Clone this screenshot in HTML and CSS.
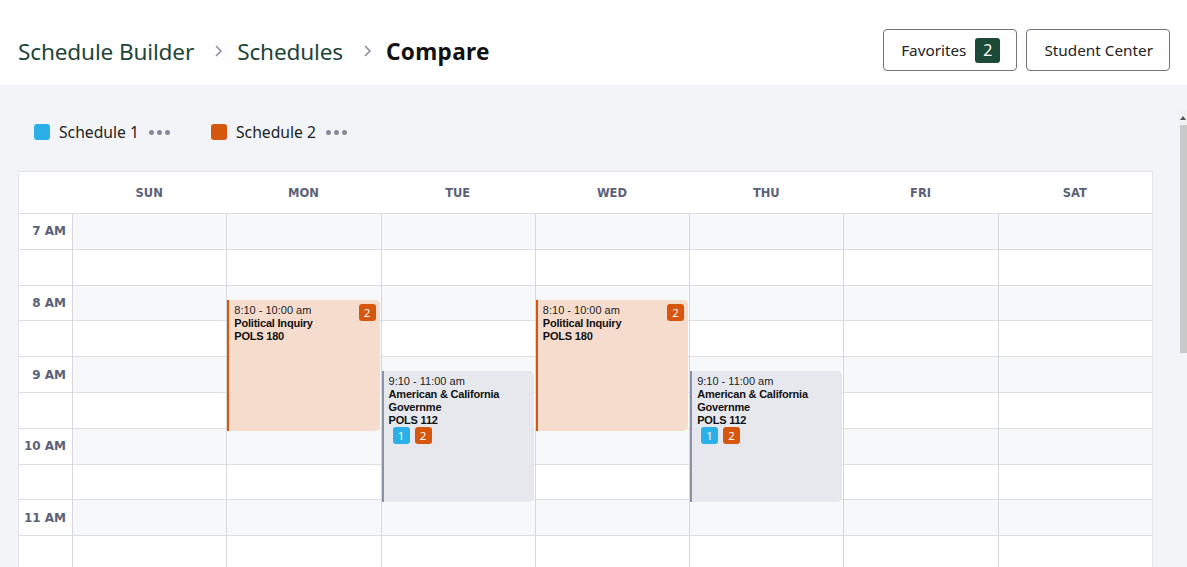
FILE: index.html
```html
<!DOCTYPE html>
<html lang="en">
<head>
<meta charset="utf-8">
<title>Compare</title>
<link rel="stylesheet" href="styles.css">
</head>
<body>
<header class="topbar">
  <nav class="crumbs">
    <a class="crumb">Schedule Builder</a>
    <svg class="chev" viewBox="0 0 10 14" width="10" height="14"><path d="M3 2l5 5-5 5" fill="none" stroke="currentColor" stroke-width="1.6"/></svg>
    <a class="crumb">Schedules</a>
    <svg class="chev" viewBox="0 0 10 14" width="10" height="14"><path d="M3 2l5 5-5 5" fill="none" stroke="currentColor" stroke-width="1.6"/></svg>
    <span class="crumb current">Compare</span>
  </nav>
  <div class="actions">
    <button class="btn">Favorites <span class="count">2</span></button>
    <button class="btn">Student Center</button>
  </div>
</header>
<div class="main">
  <div class="content">
    <div class="legend">
      <div class="legend-item"><span class="swatch blue"></span>Schedule 1<span class="more"><i></i><i></i><i></i></span></div>
      <div class="legend-item"><span class="swatch orange"></span>Schedule 2<span class="more"><i></i><i></i><i></i></span></div>
    </div>
    <div class="calendar">
      <div class="cal-head">
        <div class="corner"></div>
        <div class="dayname">SUN</div>
        <div class="dayname">MON</div>
        <div class="dayname">TUE</div>
        <div class="dayname">WED</div>
        <div class="dayname">THU</div>
        <div class="dayname">FRI</div>
        <div class="dayname">SAT</div>
      </div>
      <div class="cal-body">
        <div class="times">
          <div class="slot hour"><span>7 AM</span></div><div class="slot"></div>
          <div class="slot hour"><span>8 AM</span></div><div class="slot"></div>
          <div class="slot hour"><span>9 AM</span></div><div class="slot"></div>
          <div class="slot hour"><span>10 AM</span></div><div class="slot"></div>
          <div class="slot hour"><span>11 AM</span></div><div class="slot"></div>
        </div>
        <div class="day">
          <div class="slot hour"></div><div class="slot"></div><div class="slot hour"></div><div class="slot"></div><div class="slot hour"></div><div class="slot"></div><div class="slot hour"></div><div class="slot"></div><div class="slot hour"></div><div class="slot"></div>
        </div>
        <div class="day">
          <div class="slot hour"></div><div class="slot"></div><div class="slot hour"></div><div class="slot"></div><div class="slot hour"></div><div class="slot"></div><div class="slot hour"></div><div class="slot"></div><div class="slot hour"></div><div class="slot"></div>
          <div class="event ev-orange" style="top:86px;height:131px">
            <span class="badge orange br">2</span>
            <div class="ev-time">8:10 - 10:00 am</div>
            <div class="ev-title">Political Inquiry</div>
            <div class="ev-title">POLS 180</div>
          </div>
        </div>
        <div class="day">
          <div class="slot hour"></div><div class="slot"></div><div class="slot hour"></div><div class="slot"></div><div class="slot hour"></div><div class="slot"></div><div class="slot hour"></div><div class="slot"></div><div class="slot hour"></div><div class="slot"></div>
          <div class="event ev-gray" style="top:157px;height:131px">
            <div class="ev-time">9:10 - 11:00 am</div>
            <div class="ev-title">American &amp; California Governme</div>
            <div class="ev-title">POLS 112</div>
            <div class="ev-badges"><span class="badge blue">1</span><span class="badge orange">2</span></div>
          </div>
        </div>
        <div class="day">
          <div class="slot hour"></div><div class="slot"></div><div class="slot hour"></div><div class="slot"></div><div class="slot hour"></div><div class="slot"></div><div class="slot hour"></div><div class="slot"></div><div class="slot hour"></div><div class="slot"></div>
          <div class="event ev-orange" style="top:86px;height:131px">
            <span class="badge orange br">2</span>
            <div class="ev-time">8:10 - 10:00 am</div>
            <div class="ev-title">Political Inquiry</div>
            <div class="ev-title">POLS 180</div>
          </div>
        </div>
        <div class="day">
          <div class="slot hour"></div><div class="slot"></div><div class="slot hour"></div><div class="slot"></div><div class="slot hour"></div><div class="slot"></div><div class="slot hour"></div><div class="slot"></div><div class="slot hour"></div><div class="slot"></div>
          <div class="event ev-gray" style="top:157px;height:131px">
            <div class="ev-time">9:10 - 11:00 am</div>
            <div class="ev-title">American &amp; California Governme</div>
            <div class="ev-title">POLS 112</div>
            <div class="ev-badges"><span class="badge blue">1</span><span class="badge orange">2</span></div>
          </div>
        </div>
        <div class="day">
          <div class="slot hour"></div><div class="slot"></div><div class="slot hour"></div><div class="slot"></div><div class="slot hour"></div><div class="slot"></div><div class="slot hour"></div><div class="slot"></div><div class="slot hour"></div><div class="slot"></div>
        </div>
        <div class="day">
          <div class="slot hour"></div><div class="slot"></div><div class="slot hour"></div><div class="slot"></div><div class="slot hour"></div><div class="slot"></div><div class="slot hour"></div><div class="slot"></div><div class="slot hour"></div><div class="slot"></div>
        </div>
      </div>
    </div>
  </div>
  <div class="scrollbar">
    <div class="arrow"></div>
    <div class="thumb"></div>
  </div>
</div>
</body>
</html>
```

FILE: styles.css
```css
* { box-sizing: border-box; }
html, body { margin: 0; padding: 0; height: 100%; overflow: hidden; }
body {
  background: #f3f4f8;
  font-family: "Noto Sans", "Open Sans", sans-serif;
  color: #222;
}
.topbar {
  height: 85px;
  background: #fff;
  display: flex;
  align-items: flex-start;
  justify-content: space-between;
  padding: 29px 17px 0 18px;
}
.crumbs {
  display: flex;
  align-items: center;
  height: 44px;
}
.crumb {
  font-size: 22.6px;
  color: #1f4536;
  letter-spacing: -0.15px;
}
.crumb.current {
  color: #111;
  font-weight: 700;
  letter-spacing: 0.3px;
}
.chev {
  color: #8c909c;
  margin: 0 14px 0 19px;
}
.actions { display: flex; gap: 9px; }
.btn {
  height: 42px;
  border: 1px solid #70747e;
  border-radius: 4px;
  background: #fff;
  font-family: "Noto Sans", sans-serif;
  font-size: 15.3px;
  color: #222;
  padding: 0 16px 0 17px;
  display: flex;
  align-items: center;
  gap: 9px;
}
.count {
  width: 25px;
  height: 25px;
  border-radius: 3px;
  background: #1b4a37;
  color: #fff;
  font-size: 16px;
  display: flex;
  align-items: center;
  justify-content: center;
}
.main {
  display: flex;
  height: calc(100% - 85px);
}
.content {
  flex: 1;
  padding: 0 25px 0 18px;
}
.legend {
  display: flex;
  align-items: center;
  gap: 41px;
  height: 86px;
  padding-left: 16px;
  padding-top: 8px;
}
.legend-item {
  display: flex;
  align-items: center;
  font-size: 15.7px;
  color: #222;
}
.swatch {
  width: 16px;
  height: 16px;
  border-radius: 3px;
  margin-right: 9px;
}
.swatch.blue { background: #2ab0e6; }
.swatch.orange { background: #d5560c; }
.more {
  display: flex;
  gap: 3px;
  margin-left: 10px;
}
.more i {
  width: 5px;
  height: 5px;
  border-radius: 50%;
  background: #868b9a;
}
.calendar {
  background: #fff;
  border: 1px solid #e1e3e8;
  border-bottom: none;
}
.cal-head {
  display: grid;
  grid-template-columns: 53px repeat(7, 1fr);
  height: 42px;
  border-bottom: 1px solid #dcdee4;
}
.dayname {
  display: flex;
  align-items: center;
  justify-content: center;
  font-family: "DejaVu Sans", sans-serif;
  font-weight: 700;
  font-size: 11.5px;
  color: #5b6178;
}
.cal-body {
  display: grid;
  grid-template-columns: 53px repeat(7, 1fr);
}
.slot {
  height: 35.8px;
  border-bottom: 1px solid #dcdee4;
  background: #fff;
}
.slot.hour { background: #f7f8fa; }
.times .slot {
  display: flex;
  align-items: center;
  justify-content: flex-end;
  padding-right: 6px;
  background: #fff;
}
.times .slot span {
  font-family: "DejaVu Sans", sans-serif;
  font-weight: 700;
  font-size: 12px;
  color: #5b6178;
}
.day {
  position: relative;
  border-left: 1px solid #d6d8de;
}
.event {
  position: absolute;
  left: 0;
  right: 1px;
  border-radius: 0 5px 5px 0;
  padding: 4px 6px 0 5px;
  font-family: "Liberation Sans", Arial, sans-serif;
  font-size: 11px;
  line-height: 13px;
  color: #111;
}
.ev-orange {
  background: #f6dccd;
  border-left: 2px solid #d5560c;
}
.ev-gray {
  background: #e7e8ee;
  border-left: 2px solid #8b91a8;
}
.ev-time { color: #222; letter-spacing: 0; }
.ev-title { font-weight: 700; letter-spacing: -0.2px; }
.badge {
  width: 17px;
  height: 17px;
  border-radius: 3px;
  color: #fff;
  font-family: "Noto Sans", sans-serif;
  font-size: 11.5px;
  line-height: 17px;
  text-align: center;
  display: inline-block;
  letter-spacing: 0;
}
.badge.orange { background: #d5560c; }
.badge.blue { background: #2ab0e6; }
.badge.br {
  position: absolute;
  top: 4px;
  right: 4px;
}
.ev-badges {
  display: flex;
  gap: 5px;
  margin-top: 0;
  padding-left: 4px;
}
.scrollbar {
  width: 9px;
  padding-top: 26px;
  display: flex;
  flex-direction: column;
  background: #f3f4f8;
}
.arrow {
  height: 14px;
  background: #f1f1f1;
  position: relative;
}
.arrow::after {
  content: "";
  position: absolute;
  left: 2px;
  top: 5px;
  border-left: 3px solid transparent;
  border-right: 3px solid transparent;
  border-bottom: 4px solid #555;
}
.thumb {
  height: 228px;
  background: #c9c9c9;
  margin-left: 2px;
}
```
